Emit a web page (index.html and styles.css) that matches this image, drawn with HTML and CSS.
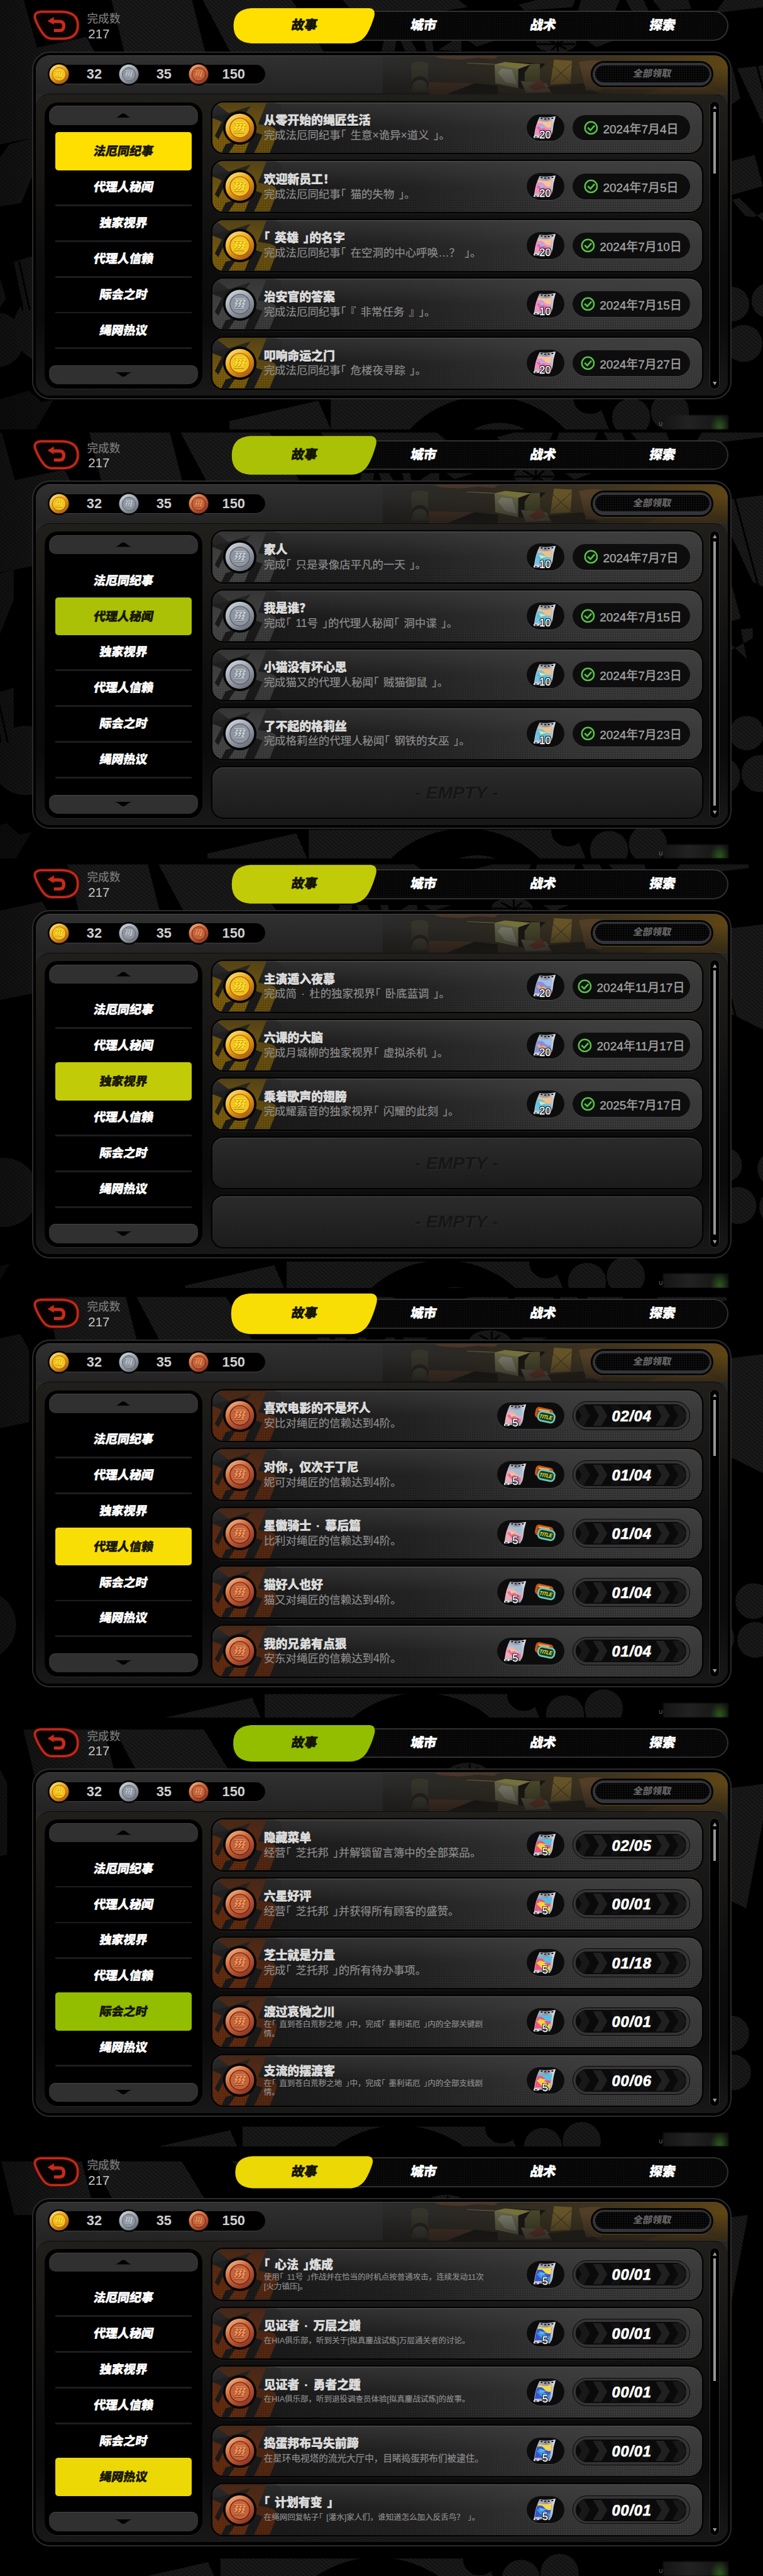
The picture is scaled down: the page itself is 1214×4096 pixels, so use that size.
FILE: index.html
```html
<!DOCTYPE html>
<html lang="zh-CN">
<head>
  <meta charset="UTF-8">
  <title>成就</title>
  <meta name="viewport" content="width=device-width, initial-scale=1.0">
  <link rel="stylesheet" href="styles.css">
</head>
<body>
  <svg class="defs" width="0" height="0">
    <defs>
      <pattern id="stripes" width="5" height="5" patternUnits="userSpaceOnUse" patternTransform="rotate(-50)">
        <rect width="5" height="5" fill="#131313"/>
        <rect width="2" height="5" fill="#1b1b1b"/>
      </pattern>
      <pattern id="mesh" width="4" height="4" patternUnits="userSpaceOnUse">
        <circle cx="1" cy="1" r="0.9" fill="#000" opacity="0.3"/>
        <circle cx="3" cy="3" r="0.9" fill="#000" opacity="0.3"/>
      </pattern>
      <linearGradient id="goldRim" x1="0" y1="0" x2="0.7" y2="1"><stop offset="0" stop-color="#ffee8c"/><stop offset="0.5" stop-color="#eda417"/><stop offset="1" stop-color="#a85a18"/></linearGradient>
      <linearGradient id="silverRim" x1="0" y1="0" x2="0.7" y2="1"><stop offset="0" stop-color="#d8dde3"/><stop offset="0.5" stop-color="#a2a8b2"/><stop offset="1" stop-color="#6a6f79"/></linearGradient>
      <linearGradient id="bronzeRim" x1="0" y1="0" x2="0.7" y2="1"><stop offset="0" stop-color="#ffc497"/><stop offset="0.45" stop-color="#d0693a"/><stop offset="1" stop-color="#8c3525"/></linearGradient>
      <linearGradient id="fade" x1="0" y1="0" x2="0" y2="1"><stop offset="0" stop-color="#222" stop-opacity="0.45"/><stop offset="0.7" stop-color="#222" stop-opacity="0"/></linearGradient>
      <linearGradient id="photoBg" x1="0" x2="1"><stop offset="0" stop-color="#2e2b26" stop-opacity="0"/><stop offset="0.3" stop-color="#302c24"/><stop offset="0.65" stop-color="#423620"/><stop offset="0.9" stop-color="#5b4318"/><stop offset="1" stop-color="#644a16"/></linearGradient>
      <linearGradient id="photoShade" x1="0" y1="0" x2="0" y2="1"><stop offset="0.3" stop-color="#1c1a17" stop-opacity="0"/><stop offset="1" stop-color="#1c1a17" stop-opacity="0.65"/></linearGradient>
      <linearGradient id="frame" x1="0" x2="1"><stop offset="0" stop-color="#c9cbd6"/><stop offset="0.6" stop-color="#8d8f9e"/><stop offset="1" stop-color="#ececf4"/></linearGradient>

      <symbol id="zigzag" viewBox="0 0 26 20">
        <g fill="none" stroke-width="2.3" stroke-linejoin="bevel">
          <path d="M4 2H22M3 18H20" stroke-width="1.5"/>
          <path d="M6 4.500H10.500L5.500 10H9L4.500 15.500"/>
          <path d="M12 4.500H16.500L11.500 10H15L10.500 15.500"/>
          <path d="M18 4.500H22.500L17.500 10H21L16.500 15.500H20"/>
        </g>
      </symbol>

      <symbol id="splash" viewBox="0 0 120 85">
        <path d="M4 0H91L75 40 62 58 22 70 15 85H0V26L16 32 4 56 10 62 30 20Z"/>
        <path d="M40 66 64 60 54 85H27Z"/>
        <path d="M76 36 98 40Q112 44 106 60L96 85H70L84 54 72 50Z" opacity="0.8"/>
        <path d="M0 24 30 17 64 6 54 20 30 27 18 34Z" fill="#1d1d1d" opacity="0.85"/>
        <rect width="116" height="85" fill="url(#fade)"/>
      </symbol>

      <!-- poster film: the tint of the picture comes from the classes -->
      <symbol id="film" viewBox="0 0 38 38">
        <path d="M10 1Q22 3 37 0Q33 12 32 25Q31 31 27 36Q13 33 1 36L1 32Q3 14 10 1Z" fill="url(#frame)"/>
        <path d="M8 8Q19 10 31 8Q28 20 27 32Q14 30 2 31Q3 18 8 8Z" fill="var(--a)"/>
        <path d="M7 12Q14 10 18 15T29 19L30 11 31 8Q18 10 8 8Z" fill="var(--b)"/>
        <path d="M5 19Q12 14 17 19T28 24L27 32Q21 31 17 31Z" fill="var(--c)"/>
        <path d="M9 15L22 18 12 21Z" fill="var(--d)"/>
        <path d="M12 3.500h3M18 4.500h3M24 4.200h3M30 3.200h3" stroke="#15151c" stroke-width="2"/>
        <path d="M0 33H9V36H0Z" fill="#e9e9ef"/>
        <path d="M2 34.500H6" stroke="#222" stroke-width="1.500"/>
      </symbol>

      <symbol id="titleTag" viewBox="0 0 38 34">
        <rect x="3" y="6" width="27" height="15" rx="4" fill="#8a3c12" stroke="#c4581a" stroke-width="4" transform="rotate(12 18 16)"/>
        <path d="M8 5 27 8 26 11 7 8Z" fill="#ffa14c"/>
        <rect x="7" y="11" width="28" height="16" rx="6" fill="#1c3a25" stroke="#69cbbf" stroke-width="3" transform="rotate(12 20 19)"/>
        <text x="9" y="20.500" font-size="9" font-weight="900" font-style="italic" fill="#f5ea26" textLength="22" lengthAdjust="spacingAndGlyphs" transform="rotate(10 10 19)" font-family="Liberation Sans">TITLE</text>
      </symbol>

      <symbol id="back" viewBox="0 0 80 54">
        <path d="M14 4H50Q77 5 77 27Q77 50 50 50H33Q24 50 18 42Q9 30 4 16Q1 5 14 4Z" fill="#080303" stroke="#4e0f09" stroke-width="6"/>
        <path d="M14 4H50Q77 5 77 27Q77 50 50 50H33Q24 50 18 42Q9 30 4 16Q1 5 14 4Z" fill="url(#mesh)" stroke="#c92a1a" stroke-width="3.200"/>
        <path d="M36 36H46Q53 36 53 28Q53 20.500 45 20.500H32" fill="none" stroke="#c92a1a" stroke-width="5.500"/>
        <path d="M25 19.500 36 13V26Z" fill="#c92a1a"/>
      </symbol>

      <symbol id="check" viewBox="0 0 24 24">
        <circle cx="12" cy="12" r="10.200" fill="#0b150b" stroke="#5cc04a" stroke-width="2.600"/>
        <path d="M6.500 11.500 11 16 18 8" fill="none" stroke="#5cc04a" stroke-width="2.800"/>
      </symbol>

      <symbol id="photo" viewBox="0 0 540 64" preserveAspectRatio="none">
        <rect width="540" height="64" fill="url(#photoBg)"/>
        <path d="M45 12Q58 6 71 12V60H45Z" fill="#3c3b2e" opacity="0.8"/>
        <ellipse cx="58" cy="46" rx="13" ry="12" fill="#232220"/><ellipse cx="58" cy="49" rx="11" ry="9" fill="#45443a" opacity="0.8"/>
        <path d="M72 44 142 46 100 64H72Z" fill="#4c3526"/>
        <path d="M106 62 144 46 180 50V64H106Z" fill="#161412"/>
        <path d="M175 14 195 10 255 13 222 46V56L176 46Z" fill="#171614"/>
        <path d="M175 14H212V54L176 46Z" fill="#66674c"/>
        <path d="M175 14 192 10 232 14 212 22Z" fill="#7d783f"/>
        <path d="M186 21 202 23 210 48 192 44 180 28Z" fill="#8f8e84" opacity="0.65"/>
        <path d="M232 13H246V44H232L222 42V28Z" fill="#4a492c"/>
        <path d="M268 6 296 8 294 46 262 48Z" fill="#6c592b"/><path d="M264 14 294 44M294 14 264 44" stroke="#3b321d"/>
        <path d="M216 42 256 46 266 60 224 62Z" fill="#5e5747"/><path d="M228 52 248 40 256 54 238 58Z" fill="#693527"/>
        <path d="M258 52 312 46 340 64 266 64Z" fill="#221e18"/>
        <path d="M307 10Q330 4 350 10L342 58H318Z" fill="#62482e" opacity="0.7"/>
        <path d="M80 0 180 0 175 5 150 3 120 6 90 4Z" fill="#68412d" opacity="0.6"/>
        <path d="M132 12 175 14" stroke="#77644a"/>
        <path d="M430 56 500 50 540 64H410Z" fill="#7b5527" opacity="0.45"/>
        <rect width="540" height="64" fill="url(#photoShade)"/>
        <rect width="540" height="64" fill="url(#mesh)" opacity="0.6"/>
      </symbol>

      <!-- wallpaper, slides a little to the left on every screen -->
      <symbol id="wallpaper" viewBox="0 0 1500 720" overflow="visible">
        <g fill="url(#stripes)">
          <path d="M-40 0H40L62 80 145 62 160 90V210L-40 250Z"/>
          <path d="M187 0H322L345 90H209Z"/>
          <path d="M340 0H490L545 90H388Z"/>
          <path d="M575 0H770L785 12 660 30H600Z"/>
          <path d="M644 68H665L662 86H640ZM672 68H690L700 86H680ZM712 68H725L728 86H716ZM735 84 760 68H774V86ZM785 68H832L800 78Z"/>
          <path d="M870 8 900 0H965L960 12 880 18ZM975 0H1040L1032 18H970ZM1050 0H1080L1088 18H1060ZM1095 0H1155L1160 15 1110 18Z"/>
          <ellipse cx="933" cy="72" rx="34" ry="16"/>
          <path d="M985 68H1030L1000 79Z"/>
          <path d="M1215 0H1330V6L1200 22Z"/>
          <path d="M1237 115 1440 90 1400 300 1300 250ZM1228 110 1242 165 1228 175Z"/>
          <path d="M1228 270 1266 260 1280 312 1228 327ZM1228 335 1240 332 1290 380 1280 330 1300 328V345L1265 364 1250 362Z"/>
          <circle cx="1228" cy="510" r="29"/><circle cx="1248" cy="576" r="31"/><circle cx="1290" cy="504" r="29"/><circle cx="1312" cy="572" r="31"/>
          <circle cx="1375" cy="510" r="30"/><circle cx="1378" cy="575" r="30"/>
          <path d="M-80 370 16 242 60 230V280L36 340-80 360Z"/>
          <path d="M20 440 60 428V545L44 530ZM-60 460-8 440 10 500-40 580Z"/>
          <circle cx="-6" cy="570" r="46"/><circle cx="80" cy="550" r="58"/>
          <path d="M0 670 48 655 60 665 75 680 0 720ZM-50 700 90 670 60 720H-50Z" opacity="0.7"/>
          <path d="M385 706 534 672 555 720H385Z"/>
          <path d="M555 666H1000L1022 720H555Z"/>
          <circle cx="1059" cy="700" r="32"/><circle cx="1124" cy="690" r="32"/>
        </g>
        <ellipse cx="818" cy="820" rx="170" ry="156"/>
        <ellipse cx="990" cy="668" rx="28" ry="26"/>
        <ellipse cx="1190" cy="300" rx="20" ry="30"/>
        <ellipse cx="838" cy="746" rx="60" ry="37" fill="url(#stripes)"/>
        <path d="M915 64 950 82M950 64 925 84M900 74H965M936 58V88" stroke="#000" stroke-width="3"/>
        <path d="M22 440 38 520M32 438 50 520M1270 110 1310 260M1240 170 1290 300" stroke="#000" stroke-width="3"/>
      </symbol>
    </defs>
  </svg>

  <main id="page"></main>

  <script src="script.js"></script>
</body>
</html>
```

FILE: styles.css
```css
body {
  margin: 0;
  background: #000;
  font-family: "Liberation Sans", "Noto Sans CJK SC", sans-serif;
  overflow: hidden;
}

.defs {
  position: absolute;
}

#page {
  width: 1280px;
  zoom: 0.94828;
}

.screen {
  position: relative;
  width: 1280px;
  height: 719.9px;
  overflow: hidden;
  background: #000;
}

.wallpaper {
  position: absolute;
  top: 0;
  left: 0;
  width: 1500px;
  height: 720px;
  overflow: visible;
}

.screen::before {
  content: "";
  position: absolute;
  inset: 0;
  z-index: 1;
  background: linear-gradient(90deg, rgba(0,0,0,0.35), transparent 12%);
}

.topbar,
.panel {
  position: relative;
  z-index: 2;
}

/* top bar */
.topbar {
  display: flex;
  height: 86px;
  box-sizing: border-box;
  padding: 16px 0 0 55px;
}

.back {
  flex: none;
  width: 79px;
  height: 53px;
}

.count {
  flex: none;
  width: 246px;
  padding: 1px 0 0 12px;
  color: #757575;
  font-size: 18.6px;
  font-weight: 500;
  line-height: 30px;
}

.count b {
  display: block;
  padding-left: 2px;
  color: #c4c4c4;
  font-size: 21.5px;
  font-weight: 400;
  line-height: 20px;
}

.tabs {
  display: flex;
  flex: none;
  align-items: center;
  width: 824px;
  height: 46px;
  margin: 2px 0 0 2px;
  border: 2.5px solid #303030;
  border-radius: 26px;
  background-color: #0a0a0a;
  background-image: radial-gradient(#000 35%, transparent 40%);
  background-size: 4px 4px;
}

.tab {
  flex: none;
  width: 200.5px;
  color: #fff;
  font-size: 21.5px;
  font-weight: 900;
  line-height: 48px;
  text-align: center;
  transform: skewX(-10deg);
  -webkit-text-stroke: 0.6px currentColor;
}

.tab.on {
  position: relative;
  margin-left: 14px;
  width: 201px;
  margin-right: -1px;
  color: #141400;
}

.tab.on svg {
  position: absolute;
  z-index: -1;
  left: 50%;
  top: 50%;
  transform: translate(-50%, -50%) skewX(10deg);
  fill: var(--accent);
  overflow: visible;
}

/* panel */
.panel {
  box-sizing: border-box;
  width: 1174px;
  height: 584px;
  margin-left: 54px;
  padding: 4.5px;
  border: 3px solid #2b2b2b;
  border-radius: 30px;
  background: #000;
}

.inside {
  height: 100%;
  border-radius: 23px;
  background: #272727;
  overflow: hidden;
}

.head {
  position: relative;
  display: flex;
  justify-content: space-between;
  height: 65px;
  box-sizing: border-box;
  padding: 9px 24px 0 20px;
  background: linear-gradient(#303030, #232323);
  border-top: 1px solid #464646;
}

.photo {
  position: absolute;
  right: 0;
  top: 0;
  width: 579px;
  height: 64px;
}

.coins {
  position: relative;
  display: flex;
  align-items: center;
  width: 364px;
  height: 32px;
  margin-top: 6px;
  background: #000;
  border-radius: 16px;
  box-shadow: 0 1px 0 #404040;
}

.coins span {
  width: 79px;
  color: #d0d0d0;
  font-size: 23px;
  font-weight: 700;
  text-align: center;
}

.coin {
  box-sizing: border-box;
  width: 38px;
  height: 38px;
  flex: none;
}

.claim {
  position: relative;
  box-sizing: border-box;
  width: 206px;
  height: 44px;
  border: 4px solid #050505;
  border-radius: 22px;
  background: #34353a;
  padding: 4px;
  box-shadow: 0 1px 0 #5a481f;
}

.claim span {
  display: block;
  height: 28px;
  border-radius: 14px;
  background-color: #030303;
  background-image: radial-gradient(#181818 30%, transparent 40%);
  background-size: 4px 4px;
  color: #646464;
  font-size: 16px;
  font-weight: 900;
  line-height: 28px;
  text-align: center;
}

.claim i {
  display: block;
  font-style: normal;
  transform: skewX(-10deg);
}

.body {
  display: flex;
  box-sizing: border-box;
  height: 506px;
  padding: 13px 11px 0 14px;
  border-top: 2px solid #0b0b0b;
  border-radius: 24px 24px 0 0;
  background: linear-gradient(#211f1c, #0c0c0c 55%, #0a0a0a 75%, #181818);
}

/* sidebar */
.side {
  display: flex;
  flex: none;
  flex-direction: column;
  align-items: center;
  box-sizing: border-box;
  width: 265px;
  height: 480px;
  padding: 6px 7px;
  border-radius: 22px;
  background: #000;
  box-shadow: 0 1px 0 #2c2c2c;
}

.arrow {
  display: flex;
  flex: none;
  align-items: center;
  justify-content: center;
  width: 250px;
  height: 32px;
  border-radius: 16px 16px 11px 11px;
  background: #303030;
  box-shadow: inset 0 1px 0 #454545;
}

.arrow svg {
  width: 28px;
  height: 8px;
}

.side ul {
  list-style: none;
  margin: 0;
  padding: 14px 0 0;
  height: 389px;
  box-sizing: content-box;
}

.side li {
  position: relative;
  width: 229px;
  height: 60px;
  color: #fff;
  font-size: 20px;
  font-weight: 900;
  line-height: 61px;
  text-align: center;
}

.side li::after {
  content: "";
  position: absolute;
  left: 0;
  right: 0;
  bottom: -2px;
  height: 3px;
  background: #1c1c1c;
}

.side li span {
  display: block;
  transform: skewX(-10deg);
  -webkit-text-stroke: 0.5px currentColor;
}

.side li.on {
  z-index: 1;
  margin: -2px 0;
  padding: 2px 0;
  border-radius: 5px;
  background: var(--accent);
  color: #161600;
}

.side li.on::after {
  display: none;
}

.side .arrow:last-child {
  border-radius: 11px 11px 16px 16px;
}

/* records */
.rows {
  display: flex;
  flex: none;
  flex-direction: column;
  gap: 13.7px;
  width: 821px;
  margin: 0 13px 0 17px;
}

.row {
  position: relative;
  display: flex;
  align-items: center;
  flex: none;
  box-sizing: border-box;
  height: 85px;
  padding: 0 20px 0 18px;
  border-radius: 19px 22px 22px 19px;
  background: linear-gradient(180deg, rgba(66,66,66,0.55), transparent 50%), linear-gradient(90deg, #1b1b1b 12%, #232323 40%, #383838 75%, #3b3b3b);
  box-shadow: 0 0 0 2.5px #030303, 0 4px 1px rgba(40,40,40,0.45), inset 0 1.5px 0 #4a4a4a;
}

.row::after {
  content: "";
  position: absolute;
  inset: 20px 0 0;
  border-radius: 0 0 22px 19px;
  background: radial-gradient(rgba(0,0,0,0.3) 35%, transparent 45%);
  background-size: 4px 4px;
  -webkit-mask: linear-gradient(transparent, #000);
  mask: linear-gradient(transparent, #000);
  pointer-events: none;
}

.row > * {
  position: relative;
  z-index: 1;
}

.row .splash {
  position: absolute;
  z-index: 0;
  left: 0;
  top: 0;
  width: 120px;
  height: 85px;
  border-radius: 19px;
}

.row .coin {
  width: 56px;
  height: 56px;
}

.words {
  width: 350px;
  flex: none;
  padding-left: 12px;
  margin-top: 2px;
  white-space: nowrap;
}

.words h3 {
  margin: 0;
  color: #dcdcdc;
  font-size: 20px;
  font-weight: 900;
  line-height: 24px;
  letter-spacing: -0.1px;
  word-spacing: 3px;
  text-shadow: 0 1px 1px #000;
  -webkit-text-stroke: 0.5px currentColor;
}

.words p {
  margin: 0;
  color: #8e8e8e;
  font-size: 18.4px;
  line-height: 24px;
  word-spacing: 2.5px;
  -webkit-text-stroke: 0.2px currentColor;
}

.words p.mid {
  font-size: 15.4px;
}

.words p.small {
  font-size: 13.2px;
}

.words p.two {
  line-height: 15.5px;
}

.half {
  font-feature-settings: "halt";
}

.rewards {
  display: flex;
  flex: none;
  align-items: center;
  justify-content: space-between;
  box-sizing: border-box;
  height: 45px;
  margin-left: auto;
  padding: 0 13px 0 12px;
  gap: 13px;
  border-radius: 23px;
  background: #0c0c0c;
  box-shadow: 0 1px 0 #454545;
}

.film {
  position: relative;
  width: 38px;
  height: 38px;
}

.film svg {
  display: block;
  width: 38px;
  height: 38px;
}

.film b {
  position: absolute;
  left: 0;
  right: 0;
  bottom: -4px;
  color: #fff;
  font-size: 17.5px;
  font-weight: 400;
  line-height: 20px;
  text-align: center;
  text-shadow: 1px 0 #000, -1px 0 #000, 0 1px #000, 0 -1px #000, 1px 1px #000, -1px -1px #000, 1px -1px #000, -1px 1px #000;
  -webkit-text-stroke: 0.4px #fff;
}

.film.pink { --a: #f08fc0; --b: #f6c39a; --c: #f062ac; --d: #86c4f2; }
.film.blue { --a: #6cc4e6; --b: #f0c084; --c: #54c0e0; --d: #f2dca0; }
.film.dusk { --a: #7f92e2; --b: #9dbfea; --c: #eaa67f; --d: #9f80cf; }
.film.rose { --a: #f0aab6; --b: #9cc0d6; --c: #e4709e; --d: #f2c48c; }
.film.candy { --a: #f05482; --b: #4fc3e4; --c: #f7d33d; --d: #f7d33d; }
.film.night { --a: #3557d2; --b: #f3d94a; --c: #4196e6; --d: #5eb5ee; }

.tag {
  width: 37px;
  height: 34px;
}

.date {
  display: flex;
  flex: none;
  align-items: center;
  justify-content: center;
  gap: 8px;
  width: 197px;
  height: 43px;
  margin-left: 14px;
  border-radius: 22px;
  background: #0d0d0d;
  box-shadow: 0 1px 0 #474747;
  color: #a4a4a4;
  font-size: 20px;
  white-space: nowrap;
}

.date span {
  -webkit-text-stroke: 0.4px currentColor;
}

.date svg {
  width: 24px;
  height: 24px;
}

.progress {
  display: flex;
  align-items: center;
  justify-content: center;
  box-sizing: border-box;
  width: 197px;
  height: 48px;
  margin-left: 14px;
  border: 2px solid #060606;
  border-radius: 24px;
  background: #343434;
  padding: 3.5px;
  flex: none;
}

.progress svg {
  width: 186px;
  height: 38px;
  border-radius: 19px;
}

.progress text {
  fill: #fff;
  font: italic 700 25px "Liberation Sans", sans-serif;
  letter-spacing: 0.8px;
  text-anchor: middle;
  stroke: #fff;
  stroke-width: 0.7px;
}

.row.empty {
  justify-content: center;
  background: linear-gradient(#2b2b2b, #1b1b1b);
  box-shadow: 0 0 0 2.5px #030303, 0 4px 1px rgba(40,40,40,0.35), inset 0 1.5px 0 #3a3a3a;
  color: #161616;
  font-size: 30px;
  font-style: italic;
  font-weight: 700;
  text-shadow: 1px 1px 0 #2b2b2b;
}

.row.empty::after {
  display: none;
}

/* scrollbar */
.scroll {
  display: flex;
  flex: none;
  flex-direction: column;
  align-items: center;
  box-sizing: border-box;
  width: 17px;
  height: 483px;
  margin-top: -2px;
  padding: 6px 0;
  border: 2px solid #303030;
  border-radius: 9px;
  background: #000;
}

.scroll svg {
  width: 7px;
  height: 6px;
  fill: #999;
  flex: none;
}

.scroll i {
  width: 4px;
  flex: none;
  margin: 5px 0 auto;
  background: #969696;
}

/* watermark corner */
.uid {
  position: absolute;
  z-index: 2;
  right: 58px;
  bottom: 0;
  display: flex;
  align-items: flex-end;
  gap: 1px;
  color: #777;
  font-size: 9px;
  line-height: 16px;
}

.uid i {
  width: 109px;
  height: 24px;
  background: radial-gradient(ellipse 16px 22px at 95px 20px, #2c5a1c, transparent), linear-gradient(90deg, #151515, #222 40%, #121212);
  filter: blur(1px);
}
```

FILE: script.js
```js
const tabs = ["故事", "城市", "战术", "探索"];
const menu = ["法厄同纪事", "代理人秘闻", "独家视界", "代理人信赖", "际会之时", "绳网热议"];

// row: [coin, title, description, film, amount, date or progress, description size]
const screens = [
  { accent: "#ffdf00", tab: [237, 59], thumb: 103, rows: [
    ["gold", "从零开始的绳匠生活", "完成法厄同纪事「 生意×诡异×道义 」。", "pink", 20, "2024年7月4日"],
    ["gold", "欢迎新员工！", "完成法厄同纪事「 猫的失物 」。", "pink", 20, "2024年7月5日"],
    ["gold", "「 英雄 」的名字", "完成法厄同纪事「 在空洞的中心呼唤…？ 」。", "pink", 20, "2024年7月10日"],
    ["silver", "治安官的答案", "完成法厄同纪事「 『 非常任务 』 」。", "pink", 10, "2024年7月15日"],
    ["gold", "叩响命运之门", "完成法厄同纪事「 危楼夜寻踪 」。", "pink", 20, "2024年7月27日"]
  ]},
  { accent: "#abc105", tab: [243, 65], thumb: 443, rows: [
    ["silver", "家人", "完成「 只是录像店平凡的一天 」。", "blue", 10, "2024年7月7日"],
    ["silver", "我是谁？", "完成「 11号 」的代理人秘闻「 洞中谍 」。", "blue", 10, "2024年7月15日"],
    ["silver", "小猫没有坏心思", "完成猫又的代理人秘闻「 贼猫御鼠 」。", "blue", 10, "2024年7月23日"],
    ["silver", "了不起的格莉丝", "完成格莉丝的代理人秘闻「 钢铁的女巫 」。", "blue", 10, "2024年7月23日"],
    null
  ]},
  { accent: "#c2cb07", tab: [243, 65], thumb: 443, rows: [
    ["gold", "主演遁入夜幕", "完成简 · 杜的独家视界「 卧底蓝调 」。", "dusk", 20, "2024年11月17日"],
    ["gold", "六课的大脑", "完成月城柳的独家视界「 虚拟杀机 」。", "dusk", 20, "2024年11月17日"],
    ["gold", "乘着歌声的翅膀", "完成耀嘉音的独家视界「 闪耀的此刻 」。", "blue", 20, "2025年7月17日"],
    null,
    null
  ]},
  { accent: "#f9de05", tab: [245, 68], thumb: 94, rows: [
    ["bronze", "喜欢电影的不是坏人", "安比对绳匠的信赖达到4阶。", "rose", 5, "02/04"],
    ["bronze", "对你，仅次于丁尼", "妮可对绳匠的信赖达到4阶。", "rose", 5, "01/04"],
    ["bronze", "星徽骑士 · 幕后篇", "比利对绳匠的信赖达到4阶。", "rose", 5, "01/04"],
    ["bronze", "猫好人也好", "猫又对绳匠的信赖达到4阶。", "rose", 5, "01/04"],
    ["bronze", "我的兄弟有点狠", "安东对绳匠的信赖达到4阶。", "rose", 5, "01/04"]
  ]},
  { accent: "#93be00", tab: [238, 61], thumb: 53, rows: [
    ["bronze", "隐藏菜单", "经营「 芝托邦 」并解锁留言簿中的全部菜品。", "candy", 5, "02/05"],
    ["bronze", "六星好评", "经营「 芝托邦 」并获得所有顾客的盛赞。", "candy", 5, "00/01"],
    ["bronze", "芝士就是力量", "完成「 芝托邦 」的所有待办事项。", "candy", 5, "01/18"],
    ["bronze", "渡过哀恸之川", "在「 直到苍白荒秽之地 」中，完成「 墨利诺厄 」内的全部关键剧<br>情。", "candy", 5, "00/01", "small two"],
    ["bronze", "支流的摆渡客", "在「 直到苍白荒秽之地 」中，完成「 墨利诺厄 」内的全部支线剧<br>情。", "candy", 5, "00/06", "small two"]
  ]},
  { accent: "#ecd805", tab: [231, 54], thumb: 205, rows: [
    ["bronze", "「 心法 」炼成", "使用「 11号 」作战并在恰当的时机点按普通攻击，连续发动11次<br>[火力镇压]。", "night", 5, "00/01", "small two"],
    ["bronze", "见证者 · 万层之巅", "在HIA俱乐部，听到关于[拟真鏖战试炼]万层通关者的讨论。", "night", 5, "00/01", "small"],
    ["bronze", "见证者 · 勇者之踵", "在HIA俱乐部，听到退役调查员体验[拟真鏖战试炼]的故事。", "night", 5, "00/01", "small"],
    ["bronze", "捣蛋邦布马失前蹄", "在星环电视塔的流光大厅中，目睹捣蛋邦布们被逮住。", "night", 5, "00/01", "mid"],
    ["bronze", "「 计划有变 」", "在绳网回复帖子「 [灌水]家人们，谁知道怎么加入反舌鸟？ 」。", "night", 5, "00/01", "small"]
  ]}
];

const face = { gold: ["#f4c321", "#a86509", "#ffe431"], silver: ["#8f96a1", "#5b616c", "#c3cad2"], bronze: ["#c4643b", "#6e2415", "#f0945c"] };
const splash = { gold: "#7a5c0d", silver: "#454545", bronze: "#632c10" };

function coin(kind) {
  const [fill, line, mark] = face[kind];
  return `<svg class="coin" viewBox="0 0 56 56">
    <circle cx="28" cy="28" r="28" fill="#050505"/>
    <circle cx="28" cy="28" r="24" fill="url(#${kind}Rim)"/>
    <circle cx="28" cy="28" r="16.500" fill="${fill}" stroke="${line}" stroke-width="1.500"/>
    <use href="#zigzag" x="15" y="18.500" width="26" height="20" stroke="${line}"/>
    <use href="#zigzag" x="15" y="17.500" width="26" height="20" stroke="${mark}"/>
  </svg>`;
}

// corner brackets take half a cell
function narrow(text) {
  return text.replace(/[「」『』]/g, '<span class="half">$&</span>');
}

function status(value) {
  if (value.includes("年")) {
    return `<div class="date"><svg><use href="#check"/></svg><span>${value}</span></div>`;
  }
  const chevron = (x, o) => `<path d="M${x} 2H${x + 14}L${x + 24} 19 ${x + 14} 36H${x}L${x + 10} 19Z" opacity="${o}"/>`;
  return `<div class="progress"><svg viewBox="0 0 186 38">
    <rect width="186" height="38" fill="#0b0b0b"/>
    <g fill="#2b2b2b">${chevron(0, 0.5)}${chevron(29, 0.8)}${chevron(58, 0.3)}${chevron(106, 0.3)}${chevron(134, 0.8)}${chevron(162, 0.5)}</g>
    <rect width="186" height="38" fill="url(#mesh)"/>
    <text x="94" y="28">${value}</text>
  </svg></div>`;
}

function row(data) {
  if (!data) return '<div class="row empty">- EMPTY -</div>';
  const [kind, title, desc, film, amount, value, size = ""] = data;
  const tag = film === "rose" ? '<svg class="tag"><use href="#titleTag"/></svg>' : "";
  return `<div class="row">
    <svg class="splash" fill="${splash[kind]}"><use href="#splash" width="120" height="85"/></svg>
    ${coin(kind)}
    <div class="words"><h3>${narrow(title)}</h3><p class="${size}">${narrow(desc)}</p></div>
    <div class="rewards"><div class="film ${film}"><svg><use href="#film"/></svg><b>${amount}</b></div>${tag}</div>
    ${status(value)}
  </div>`;
}

function tab(name, i, size) {
  if (i > 0) return `<div class="tab">${name}</div>`;
  const [w, h] = size;
  return `<div class="tab on"><svg width="${w}" height="${h}" viewBox="0 0 237 59" preserveAspectRatio="none">
    <path d="M30 0H228Q239 1 236 14Q231 31 224 43Q214 59 195 59H30Q0 57 0 29.500Q0 2 30 0Z"/></svg>${name}</div>`;
}

document.getElementById("page").innerHTML = screens.map((s, n) => `
  <section class="screen" style="--accent: ${s.accent}">
    <svg class="wallpaper"><use href="#wallpaper" x="${-37 * n}" y="${5 * n}" width="1500" height="720"/></svg>
    <div class="topbar">
      <svg class="back"><use href="#back"/></svg>
      <div class="count">完成数<b>217</b></div>
      <div class="tabs">${tabs.map((t, i) => tab(t, i, s.tab)).join("")}</div>
    </div>
    <div class="panel"><div class="inside">
      <div class="head">
        <svg class="photo"><use href="#photo"/></svg>
        <div class="coins">${coin("gold")}<span>32</span>${coin("silver")}<span>35</span>${coin("bronze")}<span>150</span></div>
        <div class="claim"><span><i>全部领取</i></span></div>
      </div>
      <div class="body">
        <div class="side">
          <div class="arrow"><svg viewBox="0 0 28 8"><path d="M0 8Q5 7 9 3 14-2 19 3 23 7 28 8Z"/></svg></div>
          <ul>${menu.map((m, i) => `<li class="${i === n ? "on" : ""}"><span>${m}</span></li>`).join("")}</ul>
          <div class="arrow"><svg viewBox="0 0 28 8"><path d="M0 0Q5 1 9 5 14 10 19 5 23 1 28 0Z"/></svg></div>
        </div>
        <div class="rows">${s.rows.map(row).join("")}</div>
        <div class="scroll">
          <svg viewBox="0 0 7 6"><path d="M3.500 0 7 6H0Z"/></svg>
          <i style="height: ${s.thumb}px"></i>
          <svg viewBox="0 0 7 6"><path d="M3.500 6 7 0H0Z"/></svg>
        </div>
      </div>
    </div></div>
    <div class="uid">U<i></i></div>
  </section>`).join("");
```
